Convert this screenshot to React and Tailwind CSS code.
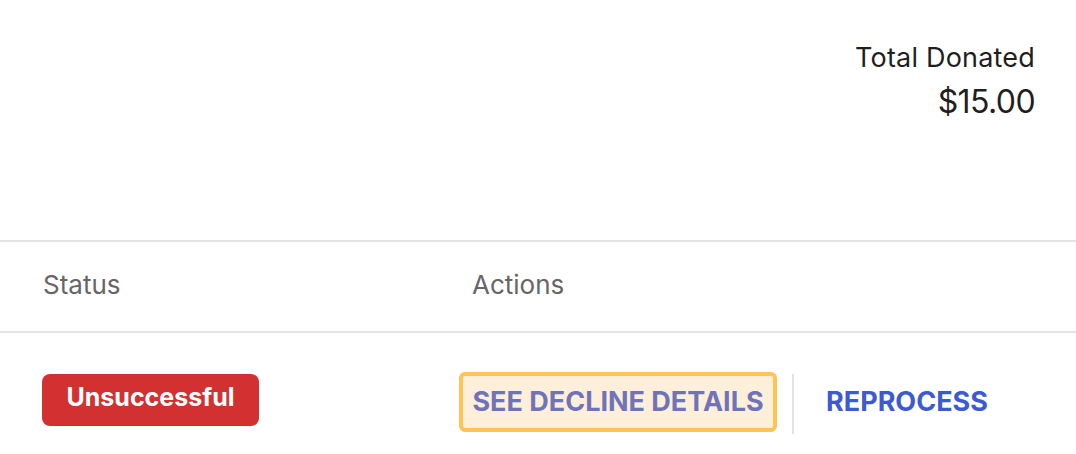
export default function App() {
  return (
    <div className="w-[1076px] h-[454px] bg-white overflow-hidden" style={{ fontFamily: "Inter, 'Liberation Sans', sans-serif" }}>
      <div className="h-[240px] flex flex-col items-end pt-[40px] pr-[41px]">
        <div className="text-[27px] leading-[36px] text-[#1f1f1f] tracking-[0.2px]">Total Donated</div>
        <div className="text-[32px] leading-[40px] text-[#1f1f1f] mt-[6px] tracking-[-0.6px]">$15.00</div>
      </div>
      <div className="border-t-2 border-[#e3e3e3] h-[91px] flex items-center pb-[4px] text-[26px] text-[#666666]">
        <div className="w-[472px] pl-[43px]">Status</div>
        <div>Actions</div>
      </div>
      <div className="border-t-2 border-[#e3e3e3] flex items-start pt-[39px]">
        <div className="w-[459px] pl-[42px] pt-[2px]">
          <span className="inline-flex items-center justify-center pb-[5px] w-[217px] h-[52px] rounded-[8px] bg-[#d33131] text-white font-bold text-[25px]">
            Unsuccessful
          </span>
        </div>
        <button className="w-[318px] h-[60px] rounded-[6px] border-4 border-[#ffc453] bg-[#fdefd9] text-[#7073b8] font-bold text-[27px]">
          SEE DECLINE DETAILS
        </button>
        <div className="w-[2px] h-[60px] bg-[#e3e3e3] ml-[15px] mt-[2px]" />
        <button className="ml-[32px] h-[60px] text-[#3e5ad2] font-bold text-[27px]">REPROCESS</button>
      </div>
    </div>
  )
}
